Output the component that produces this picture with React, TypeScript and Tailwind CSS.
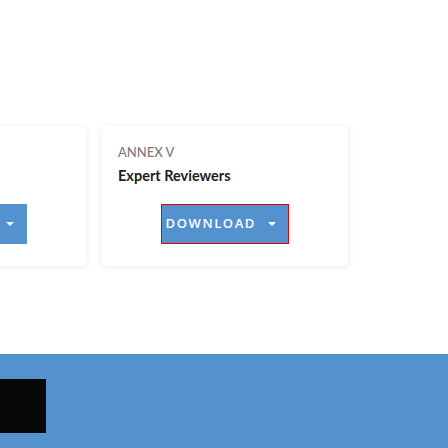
interface Annex {
  id: string;
  label?: string;
  title?: string;
  active?: boolean;
}

// first card is scrolled mostly out of view, only its button edge shows
const annexes: Annex[] = [
  { id: "iv" },
  { id: "v", label: "ANNEX V", title: "Expert Reviewers", active: true },
];

const Caret = () => (
  <svg width="8" height="4" viewBox="0 0 8 4" className="shrink-0">
    <path d="M0 0H8L4 4Z" fill="#ffffff" />
  </svg>
);

const AnnexCard = ({ item }: { item: Annex }) => (
  <div className="w-[246px] h-[140px] shrink-0 bg-white rounded-[4px] shadow-[0_1px_6px_rgba(0,0,0,0.09)] px-4 pt-4 flex flex-col">
    <p className="h-5 text-[13px] leading-5 font-medium text-[#7a7a7a] font-['Lato',sans-serif]">{item.label}</p>
    <p className="h-5 mt-[4px] text-[14.5px] leading-5 font-bold text-[#1e1e1e] font-['Lato',sans-serif]">{item.title}</p>

    {/* Download */}
    <div className="flex justify-center mt-[18px]">
      <button
        aria-label="Download"
        className={`w-[128px] h-[40px] bg-[#5391cf] flex items-center justify-end gap-3 pl-[11px] pr-[12px] border ${
          item.active ? "border-[#e30000]" : "border-[#5391cf]"
        }`}
      >
        {item.label && (
          <span className="text-[13px] font-semibold tracking-[1.6px] text-white font-['Open_Sans',sans-serif]">
            DOWNLOAD
          </span>
        )}
        <Caret />
      </button>
    </div>
  </div>
);

export default function App() {
  return (
    <div className="w-[448px] h-[448px] bg-white overflow-hidden flex flex-col">
      <div className="pt-[126px] flex gap-4 -ml-[160px]">
        {annexes.map((a) => (
          <AnnexCard key={a.id} item={a} />
        ))}
      </div>

      {/* Footer band */}
      <div className="mt-[88px] h-[94px] bg-[#5391cf] pt-[25px]">
        <div className="w-[46px] h-[54px] bg-[#080808]" />
      </div>
    </div>
  );
}
